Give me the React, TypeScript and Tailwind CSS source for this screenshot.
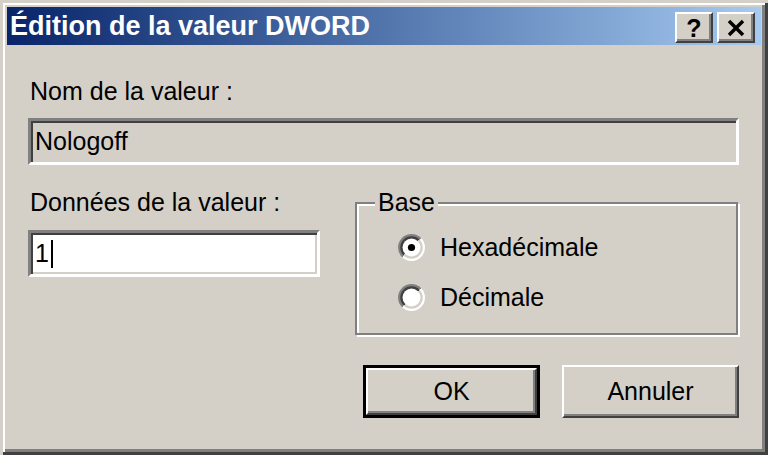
import React from "react";

const sunken =
  "border-[3px] border-t-[#808080] border-l-[#808080] border-b-white border-r-white shadow-[inset_2px_2px_0_#404040,inset_-2px_-2px_0_#d4d0c8]";
const raised =
  "border-[2px] border-t-white border-l-white border-b-[#404040] border-r-[#404040] shadow-[inset_-2px_-2px_0_#808080]";

function Radio({ checked }: { checked?: boolean }) {
  return (
    <svg width="27" height="27" viewBox="0 0 12 12" className="shrink-0">
      <defs>
        <linearGradient id="rOut" x1="0" y1="0" x2="1" y2="1">
          <stop offset="0.5" stopColor="#808080" />
          <stop offset="0.5" stopColor="#ffffff" />
        </linearGradient>
        <linearGradient id="rIn" x1="0" y1="0" x2="1" y2="1">
          <stop offset="0.5" stopColor="#404040" />
          <stop offset="0.5" stopColor="#d4d0c8" />
        </linearGradient>
      </defs>
      <circle cx="6" cy="6" r="6" fill="url(#rOut)" />
      <circle cx="6" cy="6" r="5" fill="url(#rIn)" />
      <circle cx="6" cy="6" r="4" fill="#ffffff" />
      {checked && <circle cx="6" cy="6" r="1.6" fill="#000000" />}
    </svg>
  );
}

function TitleButton({ children }: { children: React.ReactNode }) {
  return (
    <div className={`w-[38px] h-[31px] bg-[#d4d0c8] flex items-center justify-center ${raised}`}>
      {children}
    </div>
  );
}

export default function App() {
  return (
    <div className="w-[768px] h-[455px] bg-[#d4d0c8] pt-[7px] px-[7px] text-black font-['Liberation_Sans',Arial,sans-serif] shadow-[inset_3px_3px_0_#d4d0c8,inset_-3px_-3px_0_#404040,inset_5px_5px_0_#ffffff,inset_-6px_-6px_0_#808080]">
      {/* title bar */}
      <div className="h-[38px] flex items-start bg-gradient-to-r from-[#0a246a] to-[#a6caf0] pl-[3px] pr-[6px]">
        <div className="self-center text-white font-bold text-[27px] leading-[38px] whitespace-nowrap">
          Édition de la valeur DWORD
        </div>
        <div className="ml-auto mt-[5px] flex gap-[4px]">
          <TitleButton>
            <span className="font-bold text-[25px] leading-none mt-[1px]">?</span>
          </TitleButton>
          <TitleButton>
            <svg width="20" height="18" viewBox="0 0 20 18">
              <path d="M3 2 L17 16 M17 2 L3 16" stroke="#000" strokeWidth="3.5" />
            </svg>
          </TitleButton>
        </div>
      </div>

      <div className="pl-[21px] pr-[22px] text-[25px]">
        <div className="mt-[32px] h-[29px] leading-[29px] pl-[2px]">Nom de la valeur :</div>
        <div className={`mt-[12px] h-[47px] flex items-center pl-[4px] ${sunken}`}>
          <span className="leading-[29px]">Nologoff</span>
        </div>

        <div className="mt-[23px] flex">
          <div className="w-[292px]">
            <div className="h-[29px] leading-[29px] pl-[2px]">Données de la valeur :</div>
            <div className={`mt-[13px] h-[47px] bg-white flex items-center pl-[4px] ${sunken}`}>
              <span className="leading-[29px]">1</span>
              <span className="w-[2px] h-[28px] bg-black ml-[2px]" />
            </div>
          </div>

          <div className="ml-auto mr-[1px] w-[383px]">
            <div className="relative pt-[14px]">
              <div className="h-[133px] border-2 border-[#808080] shadow-[inset_2px_2px_0_#ffffff,2px_2px_0_#ffffff] pl-[41px] pt-[29px] flex flex-col gap-[21px]">
                <div className="flex items-center h-[29px]">
                  <Radio checked />
                  <span className="ml-[15px] leading-[29px]">Hexadécimale</span>
                </div>
                <div className="flex items-center h-[29px]">
                  <Radio />
                  <span className="ml-[15px] leading-[29px]">Décimale</span>
                </div>
              </div>
              <div className="absolute top-0 left-[20px] px-[3px] bg-[#d4d0c8] h-[29px] leading-[29px]">Base</div>
            </div>
          </div>
        </div>

        <div className="mt-[30px] flex justify-end gap-[22px]">
          <div className="w-[177px] h-[53px] border-[3px] border-black">
            <div className={`w-full h-full flex items-center justify-center ${raised}`}>OK</div>
          </div>
          <div className={`w-[177px] h-[53px] flex items-center justify-center ${raised}`}>Annuler</div>
        </div>
      </div>
    </div>
  );
}
